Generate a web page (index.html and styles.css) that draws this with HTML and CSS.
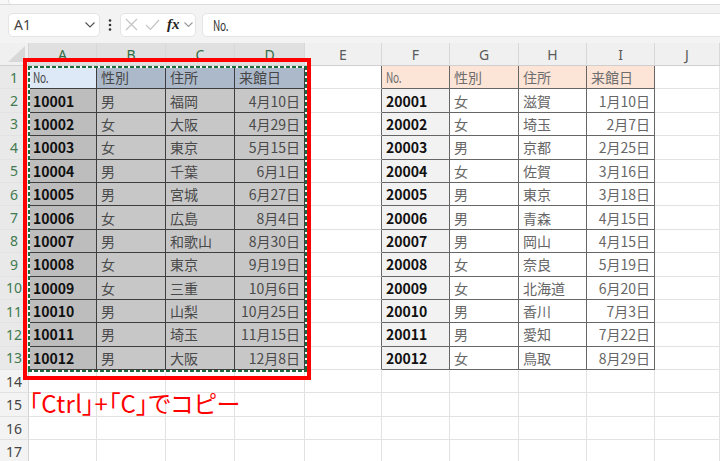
FILE: index.html
```html
<!DOCTYPE html>
<html lang="ja">
<head>
<meta charset="utf-8">
<title>Excel copy</title>
<link rel="stylesheet" href="styles.css">
</head>
<body>
<div class="top"><div class="ribbon"></div></div>
<div class="fbar">
  <div class="namebox">
    <span class="ref">A1</span>
    <svg class="chev" width="10" height="6" viewBox="0 0 10 6"><polyline points="0.5,0.5 5,5 9.5,0.5" fill="none" stroke="#555" stroke-width="1.2"/></svg>
  </div>
  <div class="vdots">
    <svg width="4" height="12" viewBox="0 0 4 12"><circle cx="2" cy="1.5" r="1.3" fill="#333"/><circle cx="2" cy="6" r="1.3" fill="#333"/><circle cx="2" cy="10.5" r="1.3" fill="#333"/></svg>
  </div>
  <div class="fxbox">
    <svg class="ic-x" width="13" height="13" viewBox="0 0 13 13"><path d="M1 1 L12 12 M12 1 L1 12" stroke="#c4c4c4" stroke-width="1.2" fill="none"/></svg>
    <svg class="ic-ok" width="15" height="12" viewBox="0 0 15 12"><polyline points="1,6 5.5,10.5 14,1" fill="none" stroke="#c4c4c4" stroke-width="1.2"/></svg>
    <span class="fx">fx</span>
    <svg class="chev-s" width="9" height="6" viewBox="0 0 9 6"><polyline points="0.5,0.5 4.5,4.5 8.5,0.5" fill="none" stroke="#999" stroke-width="1.1"/></svg>
  </div>
  <div class="formula"><span class="no">No.</span></div>
</div>
<div class="sheet">
  <div class="grid">
    <div class="corner"><svg width="18" height="17" viewBox="0 0 18 17"><polygon points="17,0 17,16 0,16" fill="#d8d8d8"/></svg></div>
    <div class="ch s">A</div><div class="ch s">B</div><div class="ch s">C</div><div class="ch s">D</div><div class="ch">E</div><div class="ch">F</div><div class="ch">G</div><div class="ch">H</div><div class="ch">I</div><div class="ch">J</div>

    <div class="rh s">1</div>
    <div class="c L H act"><span class="no">No.</span></div><div class="c L H">性別</div><div class="c L H">住所</div><div class="c L H">来館日</div>
    <div class="c E"></div>
    <div class="c T H2"><span class="no">No.</span></div><div class="c T H2">性別</div><div class="c T H2">住所</div><div class="c T H2">来館日</div>
    <div class="c"></div>

    <div class="rh s">2</div>
    <div class="c L A"><b>10001</b></div><div class="c L">男</div><div class="c L">福岡</div><div class="c L R">4月10日</div>
    <div class="c E"></div>
    <div class="c T A"><b>20001</b></div><div class="c T">女</div><div class="c T">滋賀</div><div class="c T R">1月10日</div>
    <div class="c"></div>

    <div class="rh s">3</div>
    <div class="c L A"><b>10002</b></div><div class="c L">女</div><div class="c L">大阪</div><div class="c L R">4月29日</div>
    <div class="c E"></div>
    <div class="c T A"><b>20002</b></div><div class="c T">女</div><div class="c T">埼玉</div><div class="c T R">2月7日</div>
    <div class="c"></div>

    <div class="rh s">4</div>
    <div class="c L A"><b>10003</b></div><div class="c L">女</div><div class="c L">東京</div><div class="c L R">5月15日</div>
    <div class="c E"></div>
    <div class="c T A"><b>20003</b></div><div class="c T">男</div><div class="c T">京都</div><div class="c T R">2月25日</div>
    <div class="c"></div>

    <div class="rh s">5</div>
    <div class="c L A"><b>10004</b></div><div class="c L">男</div><div class="c L">千葉</div><div class="c L R">6月1日</div>
    <div class="c E"></div>
    <div class="c T A"><b>20004</b></div><div class="c T">女</div><div class="c T">佐賀</div><div class="c T R">3月16日</div>
    <div class="c"></div>

    <div class="rh s">6</div>
    <div class="c L A"><b>10005</b></div><div class="c L">男</div><div class="c L">宮城</div><div class="c L R">6月27日</div>
    <div class="c E"></div>
    <div class="c T A"><b>20005</b></div><div class="c T">男</div><div class="c T">東京</div><div class="c T R">3月18日</div>
    <div class="c"></div>

    <div class="rh s">7</div>
    <div class="c L A"><b>10006</b></div><div class="c L">女</div><div class="c L">広島</div><div class="c L R">8月4日</div>
    <div class="c E"></div>
    <div class="c T A"><b>20006</b></div><div class="c T">男</div><div class="c T">青森</div><div class="c T R">4月15日</div>
    <div class="c"></div>

    <div class="rh s">8</div>
    <div class="c L A"><b>10007</b></div><div class="c L">男</div><div class="c L">和歌山</div><div class="c L R">8月30日</div>
    <div class="c E"></div>
    <div class="c T A"><b>20007</b></div><div class="c T">男</div><div class="c T">岡山</div><div class="c T R">4月15日</div>
    <div class="c"></div>

    <div class="rh s">9</div>
    <div class="c L A"><b>10008</b></div><div class="c L">女</div><div class="c L">東京</div><div class="c L R">9月19日</div>
    <div class="c E"></div>
    <div class="c T A"><b>20008</b></div><div class="c T">女</div><div class="c T">奈良</div><div class="c T R">5月19日</div>
    <div class="c"></div>

    <div class="rh s">10</div>
    <div class="c L A"><b>10009</b></div><div class="c L">女</div><div class="c L">三重</div><div class="c L R">10月6日</div>
    <div class="c E"></div>
    <div class="c T A"><b>20009</b></div><div class="c T">女</div><div class="c T">北海道</div><div class="c T R">6月20日</div>
    <div class="c"></div>

    <div class="rh s">11</div>
    <div class="c L A"><b>10010</b></div><div class="c L">男</div><div class="c L">山梨</div><div class="c L R">10月25日</div>
    <div class="c E"></div>
    <div class="c T A"><b>20010</b></div><div class="c T">男</div><div class="c T">香川</div><div class="c T R">7月3日</div>
    <div class="c"></div>

    <div class="rh s">12</div>
    <div class="c L A"><b>10011</b></div><div class="c L">男</div><div class="c L">埼玉</div><div class="c L R">11月15日</div>
    <div class="c E"></div>
    <div class="c T A"><b>20011</b></div><div class="c T">男</div><div class="c T">愛知</div><div class="c T R">7月22日</div>
    <div class="c"></div>

    <div class="rh s">13</div>
    <div class="c L A"><b>10012</b></div><div class="c L">男</div><div class="c L">大阪</div><div class="c L R">12月8日</div>
    <div class="c E"></div>
    <div class="c T A"><b>20012</b></div><div class="c T">女</div><div class="c T">鳥取</div><div class="c T R">8月29日</div>
    <div class="c"></div>

    <div class="rh">14</div><div class="c"></div><div class="c"></div><div class="c"></div><div class="c"></div><div class="c"></div><div class="c"></div><div class="c"></div><div class="c"></div><div class="c"></div><div class="c"></div>
    <div class="rh">15</div><div class="c"></div><div class="c"></div><div class="c"></div><div class="c"></div><div class="c"></div><div class="c"></div><div class="c"></div><div class="c"></div><div class="c"></div><div class="c"></div>
    <div class="rh">16</div><div class="c"></div><div class="c"></div><div class="c"></div><div class="c"></div><div class="c"></div><div class="c"></div><div class="c"></div><div class="c"></div><div class="c"></div><div class="c"></div>
    <div class="rh">17</div><div class="c"></div><div class="c"></div><div class="c"></div><div class="c"></div><div class="c"></div><div class="c"></div><div class="c"></div><div class="c"></div><div class="c"></div><div class="c"></div>
  </div>
  <div class="redbox"></div>
  <div class="ants"></div>
  <div class="caption">「Ctrl」+「C」でコピー</div>
</div>
</body>
</html>
```
FILE: styles.css
```css
* { box-sizing: border-box; }
html, body { margin: 0; padding: 0; }
body {
  width: 720px;
  height: 461px;
  overflow: hidden;
  background: #f3f3f3;
  font-family: "Noto Sans CJK JP", "Noto Sans", sans-serif;
}

/* top ribbon edge */
.top { height: 5px; border-bottom: 1px solid #dcdcdc; background: #f7f7f7; }
.ribbon {
  margin-left: 8px;
  height: 4px;
  background: #fff;
  border-left: 1px solid #dcdcdc;
  border-bottom-left-radius: 6px;
}

/* formula bar */
.fbar {
  display: flex;
  align-items: center;
  height: 38px;
  padding: 7px 0 6px 8px;
}
.namebox {
  width: 92px;
  height: 24px;
  background: #fff;
  border: 1px solid #e4e4e4;
  border-radius: 5px;
  display: flex;
  align-items: center;
  justify-content: space-between;
  padding: 0 4px 0 5px;
}
.ref { font-family: "Noto Sans", sans-serif; font-size: 14px; color: #444; }
.vdots { width: 20px; display: flex; justify-content: center; align-items: center; }
.fxbox {
  width: 76px;
  height: 24px;
  background: #fff;
  border: 1px solid #e4e4e4;
  border-radius: 5px;
  display: flex;
  align-items: center;
  padding-left: 4px;
}
.ic-x { margin-right: 7px; }
.ic-ok { margin-right: 7px; }
.fx {
  font-family: "Liberation Serif", serif;
  font-style: italic;
  font-weight: bold;
  font-size: 15px;
  color: #222;
  margin-right: 4px;
  line-height: 1;
}
.formula {
  flex: 1;
  margin-left: 6px;
  margin-right: -10px;
  height: 24px;
  background: #fff;
  border: 1px solid #e4e4e4;
  border-radius: 5px;
  padding-left: 10px;
  display: flex;
  align-items: center;
  font-size: 14px;
  color: #333;
}
.no { display: inline-block; transform: scaleX(0.72); transform-origin: left center; letter-spacing: -0.3px; }

/* sheet */
.sheet { position: relative; background: #fff; height: 418px; }
.grid {
  display: grid;
  grid-template-columns: 29px 68px 69px 69px 70px 77px 68px 69px 68px 68px 65px;
  grid-template-rows: 23px repeat(17, 23.4px);
}
.corner {
  background: #f0f0f0;
  border-right: 1px solid #d4d4d4;
  border-bottom: 1px solid #d0d0d0;
  display: flex;
  align-items: flex-end;
  justify-content: flex-end;
  padding: 0 2px 2px 0;
}
.ch {
  background: #f0f0f0;
  border-right: 1px solid #d8d8d8;
  border-bottom: 1px solid #cfcfcf;
  display: flex;
  align-items: center;
  justify-content: center;
  font-family: "Noto Sans", sans-serif;
  font-size: 14px;
  color: #5a5a5a;
}
.ch.s { background: #e0e0e0; color: #2f6e44; }
.rh {
  background: #f3f3f3;
  border-right: 1px solid #d4d4d4;
  border-bottom: 1px solid #e2e2e2;
  display: flex;
  align-items: center;
  justify-content: center;
  font-family: "Noto Sans", sans-serif;
  font-size: 14px;
  color: #444;
}
.rh.s { background: #e9e9e9; color: #3f7a50; }

.c {
  border-right: 1px solid #e2e2e2;
  border-bottom: 1px solid #e2e2e2;
  display: flex;
  align-items: center;
  padding: 0 4px;
  font-size: 14px;
  color: #5a5a5a;
  white-space: nowrap;
  overflow: hidden;
}
.c b { color: #111; font-weight: 700; }
.R { justify-content: flex-end; }

/* left table (selected) */
.L { background: #c7c7c7; border-color: #3e3e3e; color: #4a4a4a; }
.L.A { background: #bdbdbd; }
.L.H { background: #acb9ca; color: #474747; }
.L.H.act { background: #dde9f6; }

/* right table */
.E { border-right-color: #666; }
.T { border-color: #666; color: #666; }
.T.A { background: #f2f2f2; }
.T.H2 { background: #fce4d6; color: #6e6e6e; }

/* overlays */
.redbox {
  position: absolute;
  left: 23px;
  top: 15px;
  width: 288px;
  height: 322px;
  border: 4px solid #ff0000;
}
.ants {
  position: absolute;
  left: 28px;
  top: 23px;
  width: 279px;
  height: 306px;
  background:
    repeating-linear-gradient(90deg, #1b6b3d 0 4px, #ffffff 4px 6px) top left / 100% 2px no-repeat,
    repeating-linear-gradient(90deg, #1b6b3d 0 4px, #ffffff 4px 6px) bottom left / 100% 2px no-repeat,
    repeating-linear-gradient(180deg, #1b6b3d 0 4px, #ffffff 4px 6px) top left / 2px 100% no-repeat,
    repeating-linear-gradient(180deg, #1b6b3d 0 4px, #ffffff 4px 6px) top right / 2px 100% no-repeat;
}
.caption {
  position: absolute;
  left: 29px;
  top: 348px;
  font-size: 24px;
  line-height: 24px;
  color: #ff0000;
  font-feature-settings: "palt";
  letter-spacing: 0.3px;
  white-space: nowrap;
}
```
